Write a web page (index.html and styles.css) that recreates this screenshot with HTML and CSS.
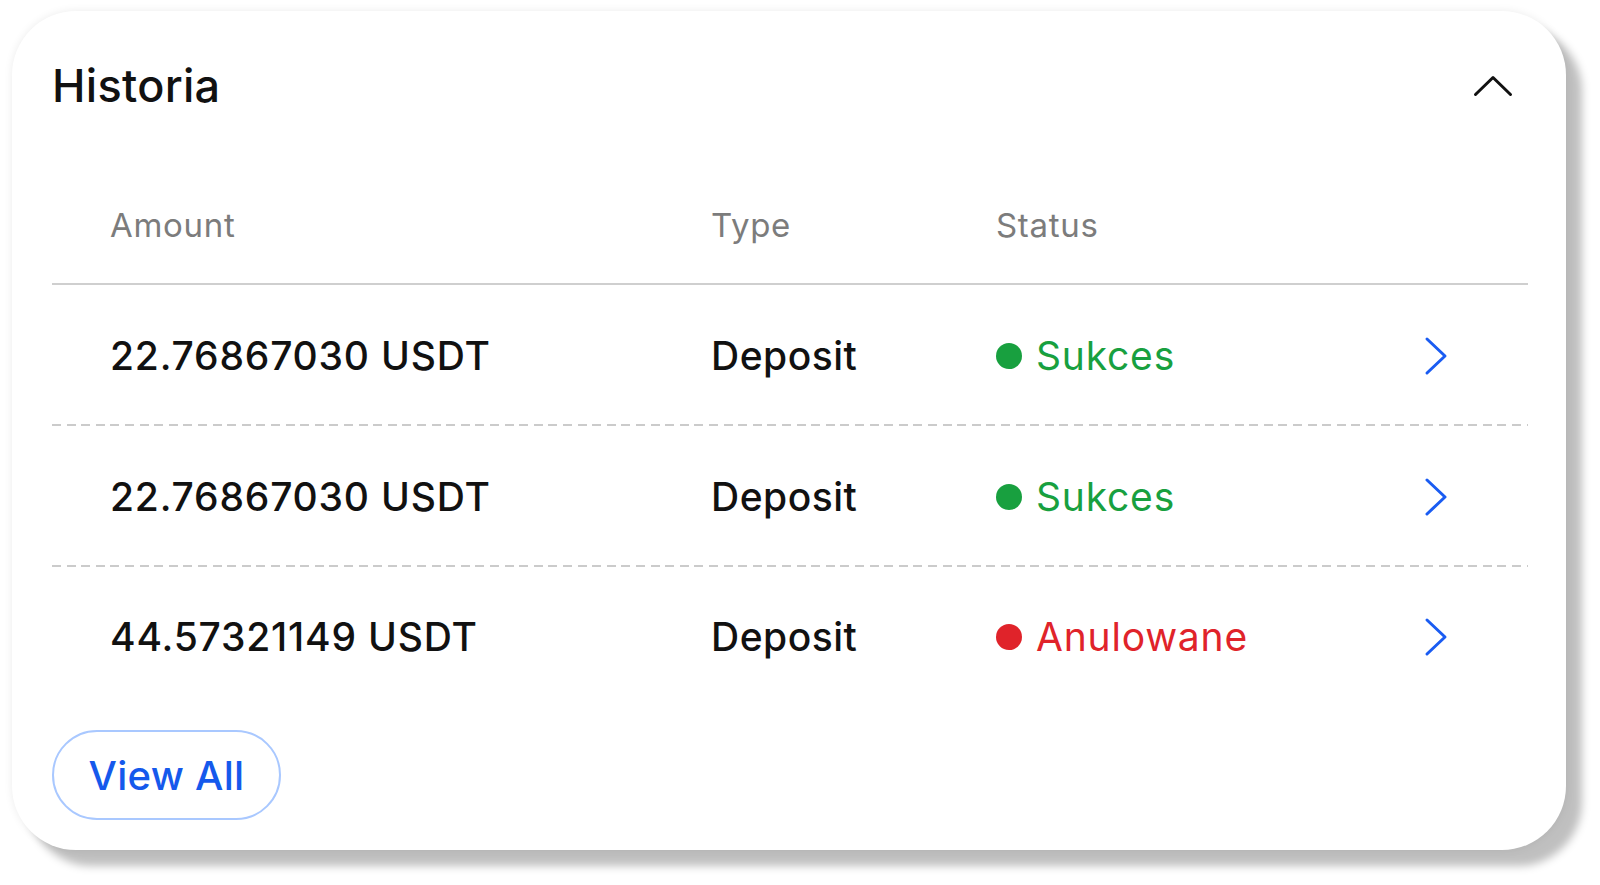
FILE: index.html
```html
<!DOCTYPE html>
<html lang="pl">
<head>
<meta charset="utf-8">
<title>Historia</title>
<link rel="stylesheet" href="styles.css">
</head>
<body>
<section class="card">
  <header class="card-head">
    <h2 class="title">Historia</h2>
    <button class="collapse" aria-label="Zwiń">
      <svg width="40" height="24" viewBox="0 0 40 24"><path d="M2.5 20.5 L20 3.5 L37.5 20.5" fill="none" stroke="#111" stroke-width="3" stroke-linecap="round" stroke-linejoin="round"/></svg>
    </button>
  </header>
  <div class="table">
    <div class="row thead">
      <div class="cell">Amount</div>
      <div class="cell">Type</div>
      <div class="cell">Status</div>
      <div class="cell"></div>
    </div>
    <div class="row item">
      <div class="cell amount">22.76867030 USDT</div>
      <div class="cell type">Deposit</div>
      <div class="cell status ok"><span class="dot"></span>Sukces</div>
      <div class="cell go"><svg width="24" height="40" viewBox="0 0 24 40"><path d="M3 3 L21 20 L3 37" fill="none" stroke="#1a5cf2" stroke-width="3" stroke-linecap="round" stroke-linejoin="round"/></svg></div>
    </div>
    <div class="row item">
      <div class="cell amount">22.76867030 USDT</div>
      <div class="cell type">Deposit</div>
      <div class="cell status ok"><span class="dot"></span>Sukces</div>
      <div class="cell go"><svg width="24" height="40" viewBox="0 0 24 40"><path d="M3 3 L21 20 L3 37" fill="none" stroke="#1a5cf2" stroke-width="3" stroke-linecap="round" stroke-linejoin="round"/></svg></div>
    </div>
    <div class="row item last">
      <div class="cell amount">44.57321149 USDT</div>
      <div class="cell type">Deposit</div>
      <div class="cell status bad"><span class="dot"></span>Anulowane</div>
      <div class="cell go"><svg width="24" height="40" viewBox="0 0 24 40"><path d="M3 3 L21 20 L3 37" fill="none" stroke="#1a5cf2" stroke-width="3" stroke-linecap="round" stroke-linejoin="round"/></svg></div>
    </div>
  </div>
  <button class="view-all">View All</button>
</section>
</body>
</html>
```
FILE: styles.css
```css
* { box-sizing: border-box; }
html, body { margin: 0; padding: 0; background: #fff; }
body {
  font-family: Inter, "Noto Sans", "Liberation Sans", sans-serif;
  color: #111;
  width: 1600px;
  height: 885px;
  overflow: hidden;
}
.card {
  margin: 11px 0 0 12px;
  width: 1554px;
  height: 839px;
  background: #fff;
  border-radius: 64px;
  box-shadow: 16px 16px 8px rgba(0,0,0,0.25), 0 0 8px rgba(0,0,0,0.08);
  padding: 0 38px 0 40px;
}
.card-head {
  display: flex;
  align-items: center;
  justify-content: space-between;
  padding: 48px 15px 0 0;
}
.title {
  margin: 0;
  font-size: 45px;
  line-height: 54px;
  font-weight: 500;
  letter-spacing: 0.3px;
}
.collapse {
  border: 0;
  background: none;
  padding: 0;
  display: flex;
}
.table { display: flex; flex-direction: column; }
.row {
  display: grid;
  grid-template-columns: 599px 285px 1fr 104px;
  align-items: center;
}
.cell { padding-left: 60px; display: flex; align-items: center; }
.cell:first-child { padding-left: 58px; }
.thead {
  padding: 92px 0 38px;
  border-bottom: 2px solid #cfcfcf;
  font-size: 33px;
  line-height: 40px;
  letter-spacing: 0.7px;
  color: #7c7c7c;
}
.item {
  height: 141px;
  font-size: 39px;
  line-height: 48px;
  letter-spacing: 0.8px;
  background-image: repeating-linear-gradient(90deg, #cbcbcb 0 9px, transparent 9px 14.6px);
  background-size: 100% 2px;
  background-repeat: no-repeat;
  background-position: left bottom;
}
.item.last { background: none; height: 139px; }
.amount { font-weight: 500; }
.type { font-weight: 500; letter-spacing: 0.5px; }
.status { gap: 14px; font-weight: 400; }
.dot { width: 26px; height: 26px; border-radius: 50%; flex: none; }
.ok { color: #18a03f; }
.ok .dot { background: #18a03f; }
.bad { color: #e0232a; }
.bad .dot { background: #e0232a; }
.go { padding-left: 0; }
.go svg { display: block; }
.view-all {
  margin-top: 24px;
  width: 229px;
  height: 90px;
  border: 2px solid #a9c8ff;
  border-radius: 45px;
  background: #fff;
  color: #1559ec;
  font-family: Inter, "Noto Sans", "Liberation Sans", sans-serif;
  font-size: 40px;
  font-weight: 500;
  letter-spacing: 0.3px;
  padding: 0;
}
```
